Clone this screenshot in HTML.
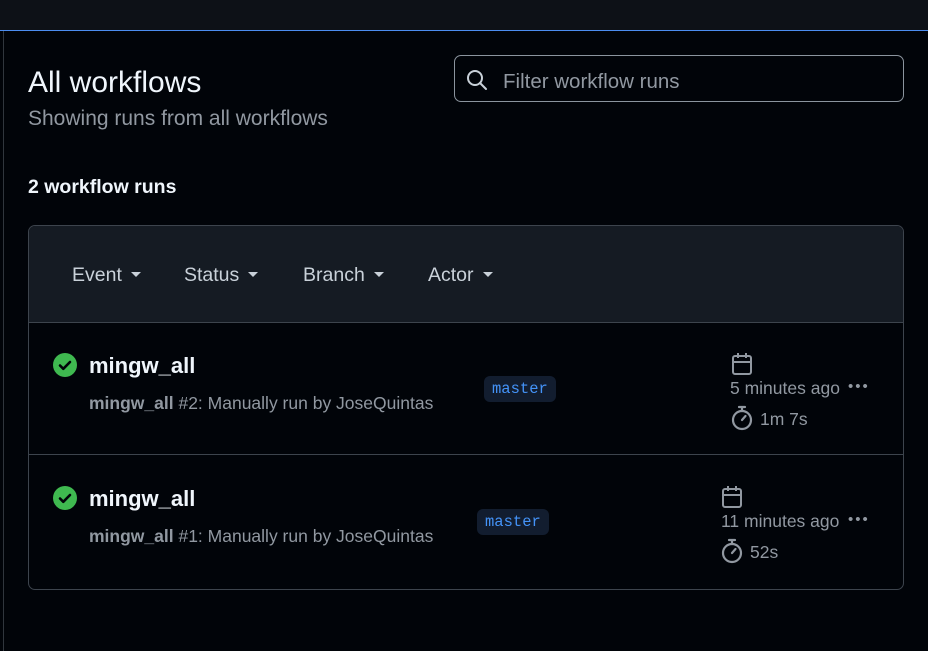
<!DOCTYPE html>
<html><head><style>
*{margin:0;padding:0;box-sizing:border-box}
body{width:928px;height:651px;background:#010409;font-family:"Liberation Sans",sans-serif;color:#e6edf3;position:relative;overflow:hidden}
.a{position:absolute;white-space:nowrap}
.top{left:0;top:0;width:928px;height:30px;background:#0d1117}
.bl{left:0;top:30px;width:928px;height:1px;background:#4c8df0}
.vl{left:3px;top:31px;width:1px;height:620px;background:#30363d}
.box{left:28px;top:225px;width:876px;height:365px;border:1px solid #3d444d;border-radius:7px;overflow:hidden}
.hdr{position:absolute;left:0;top:0;width:100%;height:97px;background:#151b23;border-bottom:1px solid #3d444d}
.sep{position:absolute;left:0;top:228px;width:100%;height:1px;background:#3d444d}
.f{font-size:19.5px;color:#c9d1d9}
.car{display:inline-block;width:0;height:0;border-left:5px solid transparent;border-right:5px solid transparent;border-top:5px solid #c9d1d9;vertical-align:middle;margin-left:9px;margin-top:-3px}
.t{font-size:22px;font-weight:bold;color:#f0f6fc}
.s{font-size:17.5px;color:#9198a1}
.s b{color:#9198a1}
.br{font-family:"Liberation Mono",monospace;font-size:15.5px;color:#4493f8;background:#121d2f;border-radius:6px;padding:4px 8px}
.m{font-size:17.5px;color:#9198a1}
.dots{font-size:15px;color:#9198a1;letter-spacing:2px}
</style></head><body>
<div class="a top"></div>
<div class="a bl"></div>
<div class="a vl"></div>
<div class="a" style="left:28px;top:66px;font-size:30px;color:#f0f6fc">All workflows</div>
<div class="a" style="left:28px;top:107px;font-size:21px;color:#9198a1">Showing runs from all workflows</div>
<div class="a" style="left:28px;top:176px;font-size:19.5px;font-weight:bold;color:#f0f6fc">2 workflow runs</div>
<div class="a" style="left:454px;top:55px;width:450px;height:47px;border:1px solid #8b949e;border-radius:7px"></div>
<svg class="a" style="left:466px;top:69px" width="22" height="22" viewBox="0 0 22 22" fill="none" stroke="#c9d1d9" stroke-width="2"><circle cx="9" cy="9" r="7"/><path d="M14 14l6 6" stroke-linecap="round"/></svg>
<div class="a" style="left:503px;top:70px;font-size:20.5px;color:#9198a1">Filter workflow runs</div>
<div class="a box">
 <div class="hdr">
  <div class="a f" style="left:43px;top:38px">Event<span class="car"></span></div>
  <div class="a f" style="left:155px;top:38px">Status<span class="car"></span></div>
  <div class="a f" style="left:274px;top:38px">Branch<span class="car"></span></div>
  <div class="a f" style="left:399px;top:38px">Actor<span class="car"></span></div>
 </div>
 <div class="sep"></div>
</div>
<!-- row 1 -->
<svg class="a" style="left:53px;top:353px" width="24" height="24" viewBox="0 0 24 24"><circle cx="12" cy="12" r="12" fill="#3fb950"/><path d="M7 12.5l3.3 3.3L17 9" stroke="#010409" stroke-width="2.6" fill="none" stroke-linecap="round" stroke-linejoin="round"/></svg>
<div class="a t" style="left:89px;top:353px">mingw_all</div>
<div class="a s" style="left:89px;top:393px"><b>mingw_all</b> #2: Manually run by JoseQuintas</div>
<div class="a br" style="left:484px;top:376px">master</div>
<svg class="a" style="left:731px;top:352px" width="22" height="24" viewBox="0 0 22 24" fill="none" stroke="#9198a1" stroke-width="2"><rect x="2" y="4" width="18" height="18" rx="2"/><path d="M2 10h18M7 1v5M15 1v5"/></svg>
<div class="a m" style="left:730px;top:378px">5 minutes ago</div>
<div class="a dots" style="left:848px;top:378px">•••</div>
<svg class="a" style="left:730px;top:405px" width="24" height="26" viewBox="0 0 24 26" fill="none" stroke="#9198a1" stroke-width="2.2"><circle cx="12" cy="15" r="9"/><path d="M9 2h6M12 2v4M12 15l3.5-4" stroke-linecap="round"/></svg>
<div class="a m" style="left:760px;top:409px">1m 7s</div>
<!-- row 2 -->
<svg class="a" style="left:53px;top:486px" width="24" height="24" viewBox="0 0 24 24"><circle cx="12" cy="12" r="12" fill="#3fb950"/><path d="M7 12.5l3.3 3.3L17 9" stroke="#010409" stroke-width="2.6" fill="none" stroke-linecap="round" stroke-linejoin="round"/></svg>
<div class="a t" style="left:89px;top:486px">mingw_all</div>
<div class="a s" style="left:89px;top:526px"><b>mingw_all</b> #1: Manually run by JoseQuintas</div>
<div class="a br" style="left:477px;top:509px">master</div>
<svg class="a" style="left:721px;top:485px" width="22" height="24" viewBox="0 0 22 24" fill="none" stroke="#9198a1" stroke-width="2"><rect x="2" y="4" width="18" height="18" rx="2"/><path d="M2 10h18M7 1v5M15 1v5"/></svg>
<div class="a m" style="left:721px;top:511px">11 minutes ago</div>
<div class="a dots" style="left:848px;top:511px">•••</div>
<svg class="a" style="left:720px;top:538px" width="24" height="26" viewBox="0 0 24 26" fill="none" stroke="#9198a1" stroke-width="2.2"><circle cx="12" cy="15" r="9"/><path d="M9 2h6M12 2v4M12 15l3.5-4" stroke-linecap="round"/></svg>
<div class="a m" style="left:750px;top:542px">52s</div>
</body></html>
